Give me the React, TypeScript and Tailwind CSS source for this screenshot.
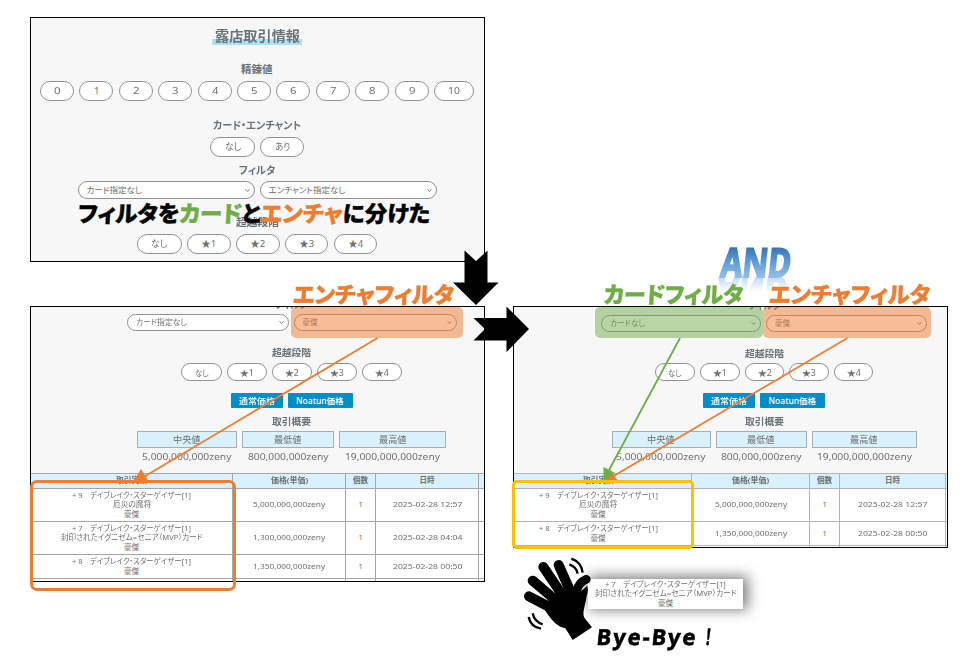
import { useLayoutEffect, useRef } from 'react';
import type { ReactNode } from 'react';

/* Text on one line, condensed or widened to occupy exactly `w` pixels. */
function Fit({ w, className = '', children }: { w: number; className?: string; children: ReactNode }) {
  const ref = useRef<HTMLSpanElement>(null);
  useLayoutEffect(() => {
    const el = ref.current;
    if (el) el.style.transform = `scaleX(${w / el.offsetWidth})`;
  }, [w]);
  return (
    <span className={`block shrink-0 ${className}`} style={{ width: w }}>
      <span ref={ref} className="inline-block origin-left whitespace-pre">
        {children}
      </span>
    </span>
  );
}

function Pill({ w, t, className }: { w: number; t: string; className: string }) {
  return (
    <div className={`flex shrink-0 items-center justify-center rounded-full border border-[#929292] bg-white text-[#707070] ${className}`}>
      <Fit w={w}>{t}</Fit>
    </div>
  );
}

function Chevron() {
  return (
    <svg className="ml-auto h-[3px] w-[5px]" viewBox="0 0 5 3" fill="none" stroke="#666" strokeWidth="0.9">
      <path d="M.5 .4 2.5 2.3 4.5 .4" />
    </svg>
  );
}

function Select({ w, t, className }: { w: number; t: string; className: string }) {
  return (
    <div className={`flex shrink-0 items-center rounded-full border border-[#929292] bg-white pl-2 pr-1 text-[#707070] ${className}`}>
      <Fit w={w}>{t}</Fit>
      <Chevron />
    </div>
  );
}

function SearchPanel() {
  return (
    <section className="flex h-[245px] w-[455px] flex-col items-center border border-black bg-[#f7f7f7] pr-px text-[10.5px] leading-[12px] text-[#697277]">
      <h1 className="mt-2.5 flex h-[17px] w-[90px] justify-center bg-[linear-gradient(transparent_11px,#ace0f2_11px)] text-[13.5px] font-bold leading-[17px]">
        <Fit w={85}>露店取引情報</Fit>
      </h1>
      <h2 className="mt-[18px] font-bold"><Fit w={32}>精錬値</Fit></h2>
      <div className="mt-[6px] flex gap-[5.4px] text-[9.5px]">
        {['0', '1', '2', '3', '4', '5', '6', '7', '8', '9'].map((n) => (
          <Pill key={n} w={n === '1' ? 5 : 6} t={n} className="h-5 w-[34px]" />
        ))}
        <Pill w={12} t="10" className="h-5 w-10" />
      </div>
      <h2 className="mt-[18px] font-bold"><Fit w={88}>カード・エンチャント</Fit></h2>
      <div className="mt-[6px] flex gap-[5px] text-[9.5px]">
        <Pill w={16} t="なし" className="h-5 w-[45px]" />
        <Pill w={15} t="あり" className="h-5 w-11" />
      </div>
      <h2 className="mt-[7px] font-bold"><Fit w={36}>フィルタ</Fit></h2>
      <div className="mt-[5px] flex gap-[5px] text-[8.5px]">
        <Select w={56} t="カード指定なし" className="h-[18px] w-[177px]" />
        <Select w={77} t="エンチャント指定なし" className="h-[18px] w-[177px]" />
      </div>
      <h2 className="mt-[17px] font-bold"><Fit w={43}>超越段階</Fit></h2>
      <div className="mt-[6px] flex gap-[5.4px] text-[9.5px]">
        <Pill w={16} t="なし" className="h-5 w-[45px]" />
        {['★1', '★2', '★3', '★4'].map((s) => (
          <Pill key={s} w={15} t={s} className="h-5 w-[43.6px]" />
        ))}
      </div>
    </section>
  );
}

type Row = { lines: [string, number][]; price: string; date: string; h: string };

const day9: Row = {
  lines: [['+ 9　デイブレイク・スターゲイザー[1]', 119], ['厄災の魔将', 38], ['豪傑', 15]],
  price: '5,000,000,000zeny', date: '2025-02-28 12:57', h: 'h-[33px]',
};
const day7: Row = {
  lines: [['+ 7　デイブレイク・スターゲイザー[1]', 119], ['封印されたイグニゼム=セニア（MVP）カード', 142], ['豪傑', 15]],
  price: '1,300,000,000zeny', date: '2025-02-28 04:04', h: 'h-[33px]',
};
const day8: Row = {
  lines: [['+ 8　デイブレイク・スターゲイザー[1]', 119], ['豪傑', 15]],
  price: '1,350,000,000zeny', date: '2025-02-28 00:50', h: 'h-[24px]',
};

function ResultPanel({ card, rows, variant }: { card: string; rows: Row[]; variant: 'left' | 'right' }) {
  const left = variant === 'left';
  const cols = left ? 'grid-cols-[202px_113px_30px_103px_73px]' : 'grid-cols-[178px_118px_30px_106px_69px]';
  const line = left ? 'border-[#a6a6a6]' : 'border-[#b4b4b4]';
  const cell = `flex items-center justify-center border-r ${line}`;
  const first = `${cell} flex-col ${left ? '' : 'pr-[9px]'}`;
  const pill = left ? 'h-[18px] w-10' : 'h-[18px] w-[39.6px]';
  const stats: [string, number, string, number, string][] = [
    ['中央値', 28, '5,000,000,000zeny', 90, left ? 'w-[100px]' : 'w-[99px]'],
    ['最低値', 28, '800,000,000zeny', 81, left ? 'w-[92px]' : 'w-[91px]'],
    ['最高値', 28, '19,000,000,000zeny', 95, left ? 'w-[107px]' : 'w-[105px]'],
  ];
  return (
    <section className={`shrink-0 overflow-hidden border border-black bg-[#f7f7f7] text-[#707070] ${left ? 'h-[276px] w-[455px]' : 'h-[242px] w-[435px]'}`}>
      <div className={`flex flex-col items-center text-[9.5px] leading-[11px] ${left ? 'w-[521px]' : 'w-[500px] pt-px'}`}>
        <h2 className="-mt-[8px] h-[11px] font-bold text-[#697277]"><Fit w={33}>フィルタ</Fit></h2>
        <div className="mt-1 flex gap-[5px] text-[7.5px]">
          <Select w={left ? 51 : 35} t={card} className={left ? 'h-[17px] w-[162px]' : 'h-[17px] w-[160px]'} />
          <Select w={15} t="豪傑" className={left ? 'h-[17px] w-[163px]' : 'h-[17px] w-[161px]'} />
        </div>
        <h2 className="mt-[16px] font-bold text-[#697277]"><Fit w={39}>超越段階</Fit></h2>
        <div className={`flex gap-[5px] text-[8.5px] ${left ? 'mt-[5px]' : 'mt-1'}`}>
          <Pill w={14} t="なし" className={left ? 'h-[18px] w-[41px]' : 'h-[18px] w-[40.6px]'} />
          {['★1', '★2', '★3', '★4'].map((s) => (
            <Pill key={s} w={13.5} t={s} className={pill} />
          ))}
        </div>
        <div className="mt-3 flex gap-[5px] text-[8.5px] font-medium text-white">
          <span className="flex h-[15px] w-[52px] items-center justify-center rounded-[1px] bg-[#058dc7]"><Fit w={36}>通常価格</Fit></span>
          <span className="flex h-[15px] w-[65px] items-center justify-center rounded-[1px] bg-[#058dc7]"><Fit w={48}>Noatun価格</Fit></span>
        </div>
        <h2 className="mt-2 font-bold text-[#697277]"><Fit w={39}>取引概要</Fit></h2>
        <div className="mt-1 flex gap-[5px]">
          {stats.map(([label, lw, value, vw, width]) => (
            <div key={label} className={`flex flex-col items-center ${width}`}>
              <div className="flex h-[17px] w-full items-center justify-center border border-[#a5b0b5] bg-[#d9f1fd]"><Fit w={lw}>{label}</Fit></div>
              <div className="mt-[3px] h-[12px] leading-[12px]"><Fit w={vw}>{value}</Fit></div>
            </div>
          ))}
        </div>
      </div>
      <div className={`border-t text-[7.5px] leading-[9.2px] ${line} ${left ? 'mt-[10px] w-[521px]' : 'mt-[10px] w-[501px]'}`}>
        <div className={`grid h-[15px] border-b bg-[#d9f1fd] font-bold ${line} ${cols}`}>
          <div className={first}><Fit w={31}>取引実績</Fit></div>
          <div className={cell}><Fit w={37}>価格(単価)</Fit></div>
          <div className={cell}><Fit w={15}>個数</Fit></div>
          <div className={cell}><Fit w={15}>日時</Fit></div>
        </div>
        {rows.map((r) => (
          <div key={r.date} className={`grid border-b bg-white ${line} ${r.h} ${cols}`}>
            <div className={first}>
              {r.lines.map(([t, w]) => <Fit key={t} w={w}>{t}</Fit>)}
            </div>
            <div className={cell}><Fit w={72}>{r.price}</Fit></div>
            <div className={cell}><Fit w={4}>1</Fit></div>
            <div className={cell}><Fit w={69}>{r.date}</Fit></div>
          </div>
        ))}
        <div className={`grid h-5 bg-white ${cols}`}>
          <div className={cell} /><div className={cell} /><div className={cell} /><div className={cell} />
        </div>
      </div>
    </section>
  );
}

function Caption({ w, className, children }: { w: number; className: string; children: ReactNode }) {
  return (
    <div className={`absolute -skew-x-3 text-[22.5px] font-black leading-[24px] [-webkit-text-stroke:0.4px_currentColor] ${className}`}>
      <Fit w={w}>{children}</Fit>
    </div>
  );
}

function Drawings() {
  return (
    <svg className="absolute inset-0" width="967" height="657" viewBox="0 0 967 657">
      <g fill="none" strokeWidth="1.8">
        <path d="M377.5 338 142 478" stroke="#ed7d31" />
        <path d="M847.500 338 612 477" stroke="#ed7d31" />
        <path d="M680 338 608 472" stroke="#70ad47" />
      </g>
      <path d="M133.500 481.500 141 469 148 480.500Z" fill="#ed7d31" />
      <path d="M604 481.500 611 470 617.500 480.500Z" fill="#ed7d31" />
      <path d="M603.500 481 603.500 467 615 473Z" fill="#70ad47" />
      <path d="M464.500 250.500 476 261 487.500 250.500V282.500H498.500L476 305 453 282.500H464.500Z" />
      <path d="M473.500 318H506.500V306.500L529 329 506.500 352V340.500H473.500L485 329Z" />
      <g transform="translate(505 465) scale(.33333)">
        <g stroke="#000" strokeLinecap="round" fill="none">
          <path d="M72 394 145 432" strokeWidth="30" />
          <path d="M83 347 155 408" strokeWidth="30" />
          <path d="M115 306 172 390" strokeWidth="30" />
          <path d="M161 300 201 390" strokeWidth="30" />
          <path d="M244 343Q219 354 216 378L216 410" strokeWidth="26" />
        </g>
        <path d="M124 412 155 385 206 370 222 385 246 362C252 376 246 386 244 399C240 425 231 443 238 458L261 487 203 525 181 490C158 487 143 467 130 451L112 424Z" />
        <g fill="none" stroke="#000" strokeWidth="7">
          <path d="M199 281Q230 292 233 323" />
          <path d="M193 298Q215 306 218 326" />
          <path d="M83 445Q88 470 113 478" />
          <path d="M71 456Q77 486 108 491" />
        </g>
      </g>
    </svg>
  );
}

export default function App() {
  return (
    <main className="relative h-[657px] w-[967px] overflow-hidden bg-white pl-[30px] pt-[17px] font-['Noto_Sans','Noto_Sans_CJK_JP',sans-serif] [font-feature-settings:'palt']">
      <SearchPanel />
      <div className="mt-[44px] flex items-start gap-7">
        <ResultPanel variant="left" card="カード指定なし" rows={[day9, day7, day8]} />
        <ResultPanel variant="right" card="カードなし" rows={[day9, day8]} />
      </div>

      <div className="absolute left-[291px] top-[307px] h-[31px] w-[172px] rounded-[5px] bg-[#ed7d31]/50" />
      <div className="absolute left-[595px] top-[307px] h-[31px] w-[168px] rounded-[5px] bg-[#70ad47]/50" />
      <div className="absolute left-[763px] top-[307px] h-[31px] w-[168px] rounded-[5px] bg-[#ed7d31]/50" />

      <div className="absolute left-[588px] top-[579px] flex h-[30px] w-[155px] flex-col items-center justify-center bg-white text-[7.5px] leading-[9.2px] text-[#707070] shadow-[3px_-1px_13px_2px_rgba(0,0,0,0.5)]">
        <Fit w={121}>+ 7　デイブレイク・スターゲイザー[1]</Fit>
        <Fit w={142}>封印されたイグニゼム=セニア（MVP）カード</Fit>
        <Fit w={15}>豪傑</Fit>
      </div>

      <Drawings />

      <div className="absolute left-[30px] top-[480px] h-[111px] w-[206px] rounded-[7px] border-[3px] border-[#ed7d31]" />
      <div className="absolute left-[512px] top-[480px] h-[69px] w-[182px] rounded-[5px] border-[3px] border-[#ffc000]" />

      <div className="absolute left-[721px] top-[240px] -skew-x-6 text-[40px] font-bold leading-[44px] text-transparent">
        <Fit w={70} className="font-['Noto_Sans']">
          <span className="bg-[linear-gradient(#2e6ca8_18%,#5b9bd5_50%,#a5c8ec_85%)] bg-clip-text [-webkit-text-stroke:2px_transparent]">AND</span>
        </Fit>
      </div>
      <div aria-hidden="true" className="absolute left-[717px] top-[269px] -scale-y-100 skew-x-6 text-[40px] font-bold leading-[44px] text-transparent">
        <Fit w={70} className="font-['Noto_Sans']">
          <span className="bg-[linear-gradient(transparent_50%,#8ab8e6_100%)] bg-clip-text [-webkit-text-stroke:2px_transparent]">AND</span>
        </Fit>
      </div>

      <Caption w={352} className="left-[78px] top-[202px] text-black">
        フィルタを<span className="text-[#70ad47]">カード</span>と<span className="text-[#ed7d31]">エンチャ</span>に分けた
      </Caption>
      <Caption w={161} className="left-[293px] top-[283px] text-[#ed7d31]">エンチャフィルタ</Caption>
      <Caption w={139} className="left-[604px] top-[283px] text-[#70ad47]">カードフィルタ</Caption>
      <Caption w={161} className="left-[769px] top-[283px] text-[#ed7d31]">エンチャフィルタ</Caption>
      <div className="absolute left-[597px] top-[624px] flex -skew-x-6 gap-[7px] text-[22px] font-bold leading-[24px] text-black">
        <Fit w={101}><span className="tracking-[2px] [-webkit-text-stroke:0.6px_black]">Bye-Bye</span></Fit>
        <Fit w={7}><span className="[-webkit-text-stroke:0.6px_black]">！</span></Fit>
      </div>
    </main>
  );
}
